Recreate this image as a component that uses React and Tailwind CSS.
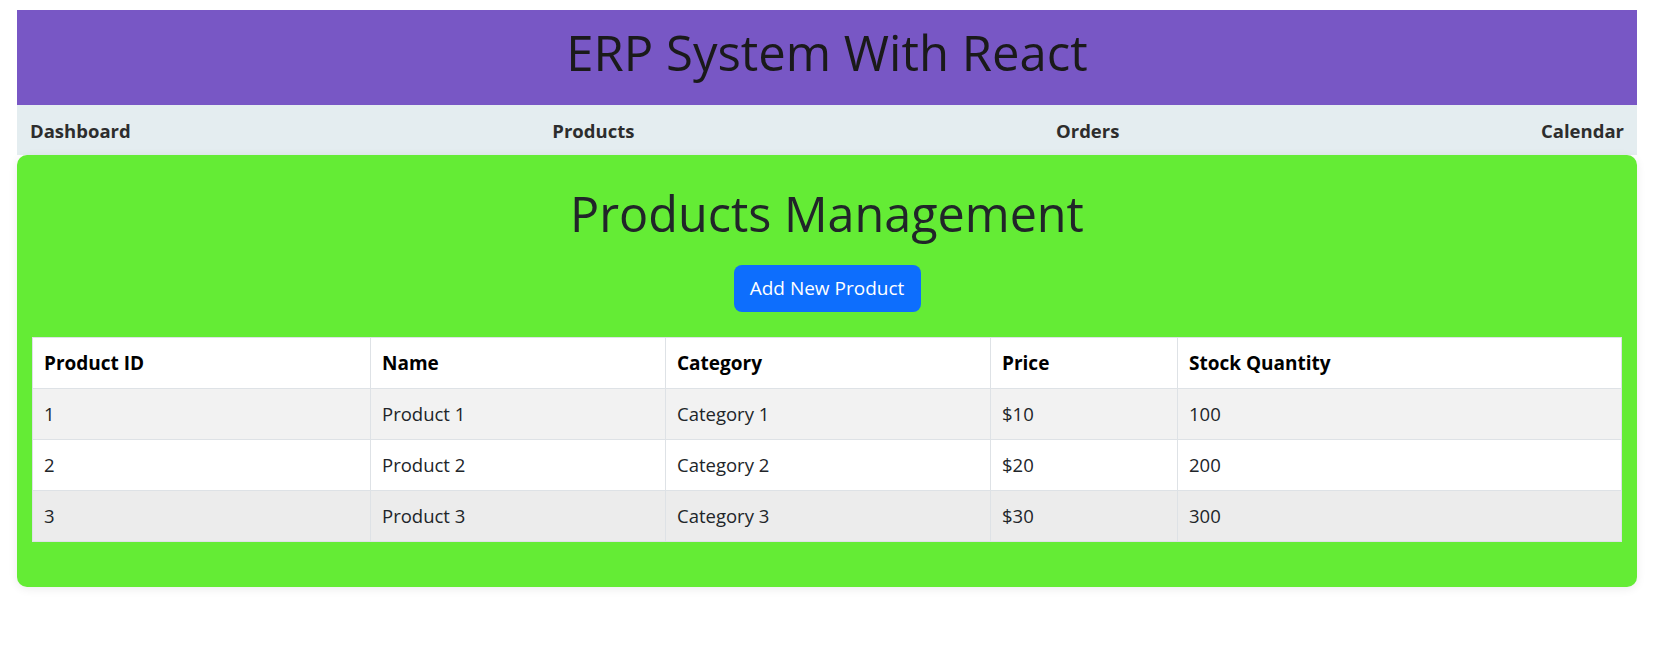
import React from 'react';

const products = [
  { id: 1, name: 'Product 1', category: 'Category 1', price: 10, stock: 100 },
  { id: 2, name: 'Product 2', category: 'Category 2', price: 20, stock: 200 },
  { id: 3, name: 'Product 3', category: 'Category 3', price: 30, stock: 300 },
];

const rowBg = ['bg-[#f2f2f2]', 'bg-white', 'bg-[#ececec]'];

export default function App() {
  return (
    <div className="min-h-screen bg-white pt-[10px] pl-[17px] pr-[22px] font-['Open_Sans',sans-serif]">
      {/* Header */}
      <header className="h-[95px] bg-[#7857c5] flex items-center justify-center pb-[10px]">
        <h1 className="text-[49px] font-medium leading-none text-[#1a1a1a]">ERP System With React</h1>
      </header>

      {/* Nav */}
      <nav className="h-[50px] bg-[#e4edf0] flex items-center justify-between px-[13px] pt-[2px] text-[18.5px] font-bold text-[#2d2d2d]">
        <a href="#">Dashboard</a>
        <a href="#">Products</a>
        <a href="#">Orders</a>
        <a href="#">Calendar</a>
      </nav>

      {/* Products */}
      <main className="bg-[#64ec35] rounded-[10px] shadow-[0_2px_10px_rgba(0,0,0,0.08)] px-[15px] pt-[29px] pb-[45px]">
        <h2 className="text-center text-[48.5px] font-medium leading-[1.2] text-[#212529]">Products Management</h2>
        <div className="flex justify-center mt-[23px]">
          <button className="h-[47px] w-[187px] rounded-[8px] bg-[#0d6efd] text-white text-[19px]">
            Add New Product
          </button>
        </div>

        <table className="w-full mt-[25px] border-collapse text-[18.5px] text-[#212529]">
          <thead>
            <tr className="bg-white h-[51px] text-black text-[19px]">
              <th className="w-[338px] border border-[#dee2e6] px-[11px] text-left font-bold">Product ID</th>
              <th className="w-[295px] border border-[#dee2e6] px-[11px] text-left font-bold">Name</th>
              <th className="w-[325px] border border-[#dee2e6] px-[11px] text-left font-bold">Category</th>
              <th className="w-[187px] border border-[#dee2e6] px-[11px] text-left font-bold">Price</th>
              <th className="border border-[#dee2e6] px-[11px] text-left font-bold">Stock Quantity</th>
            </tr>
          </thead>
          <tbody>
            {products.map((p, i) => (
              <tr key={p.id} className={`${rowBg[i]} h-[51px]`}>
                <td className="border border-[#dee2e6] px-[11px]">{p.id}</td>
                <td className="border border-[#dee2e6] px-[11px]">{p.name}</td>
                <td className="border border-[#dee2e6] px-[11px]">{p.category}</td>
                <td className="border border-[#dee2e6] px-[11px]">${p.price}</td>
                <td className="border border-[#dee2e6] px-[11px]">{p.stock}</td>
              </tr>
            ))}
          </tbody>
        </table>
      </main>
    </div>
  );
}
